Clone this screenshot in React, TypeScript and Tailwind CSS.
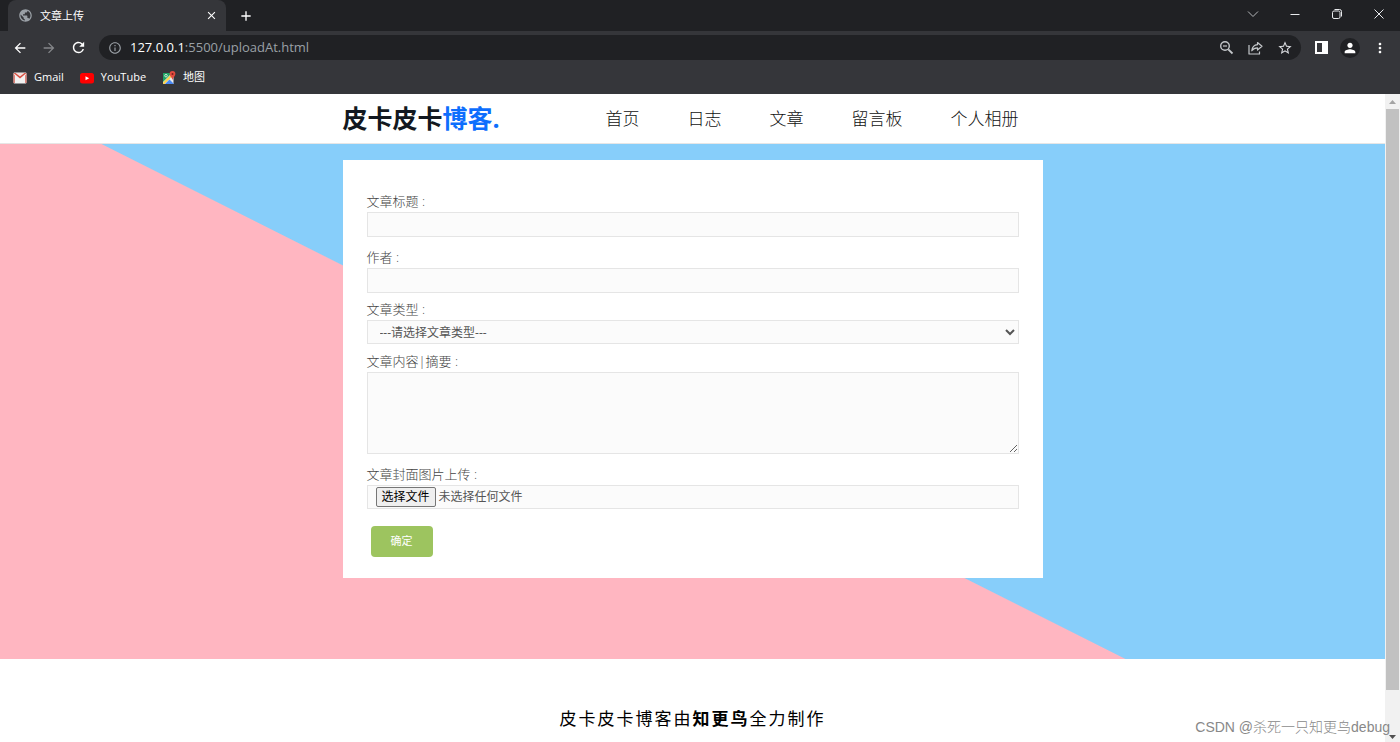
import {
  MdAdd,
  MdArrowBack,
  MdArrowForward,
  MdClose,
  MdInfoOutline,
  MdMoreVert,
  MdPerson,
  MdPublic,
  MdRefresh,
  MdStarBorder,
} from "react-icons/md";

const navItems = ["首页", "日志", "文章", "留言板", "个人相册"];

const fieldClass =
  "block w-full rounded-none border border-[#e5e5e5] bg-[#fbfbfb] px-2 text-xs text-[#555] outline-none";
const labelClass = "block pb-0.5 text-[13px] leading-[18px] font-light text-[#444]";

function GmailIcon() {
  return (
    <svg width="14" height="12" viewBox="0 0 14 12">
      <rect x="0.5" y="0.5" width="13" height="11" rx="1" fill="#f2f2f2" />
      <path d="M0.5 1h13L7 6.500z" fill="#d54b3d" />
      <path d="M2.500 1h9L7 4.500z" fill="#f2dedb" />
      <path d="M0.500 1.500v9.500h1.300V3.500zM13.500 1.500v9.500h-1.300V3.500z" fill="#d9685c" />
    </svg>
  );
}

function YouTubeIcon() {
  return (
    <svg width="14" height="12" viewBox="0 0 14 12">
      <rect x="0" y="1" width="14" height="10.500" rx="2.500" fill="#f00" />
      <path d="M5.500 4.200v4L9.200 6.200z" fill="#fff" />
    </svg>
  );
}

function MapsIcon() {
  return (
    <svg width="14" height="14" viewBox="0 0 14 14">
      <path d="M1 2h10.500v11H1z" fill="#e8eaed" />
      <path d="M1 2h9L1 11z" fill="#1fa463" />
      <path d="M1 13V11.500L9 3.500l1.500 1.500L2.500 13z" fill="#fbd24c" />
      <path d="M3 13l4.500-4.500L12 13z" fill="#4a89f3" />
      <circle cx="4" cy="4.700" r="1.300" fill="none" stroke="#fff" strokeWidth="0.700" />
      <path d="M10.500 0a2.900 2.900 0 0 1 2.900 2.900c0 2-2.300 3-2.900 6.100C9.900 5.900 7.600 4.900 7.600 2.900A2.900 2.900 0 0 1 10.500 0z" fill="#e14b3f" />
      <circle cx="10.500" cy="3" r="1" fill="#7d211b" />
    </svg>
  );
}

function ZoomOutIcon() {
  return (
    <svg width="15" height="15" viewBox="0 0 15 15" fill="none" stroke="#c4c7ca" strokeWidth="1.400">
      <circle cx="6" cy="6" r="4.300" />
      <path d="M9.300 9.300L13.500 13.500" strokeWidth="1.800" />
      <path d="M4 6h4" strokeWidth="1.200" />
    </svg>
  );
}

function ShareIcon() {
  return (
    <svg width="15" height="14" viewBox="0 0 15 14" fill="none" stroke="#c4c7ca" strokeWidth="1.200" strokeLinejoin="round">
      <path d="M1 4v9h10.500v-2.500" />
      <path d="M9.500 1.500L14 5.300 9.500 9V6.800C6.800 6.800 5.200 7.600 3.800 9.800 4.200 6.300 6 4 9.500 3.700z" />
    </svg>
  );
}

const bookmarks = [
  { label: "Gmail", Icon: GmailIcon },
  { label: "YouTube", Icon: YouTubeIcon },
  { label: "地图", Icon: MapsIcon },
];

function BrowserChrome() {
  return (
    <div className="bg-[#35363a] font-['Open_Sans','Noto_Sans_CJK_SC',sans-serif] text-white">
      <div className="flex h-[31px] items-stretch bg-[#202124] pl-2">
        <div className="flex w-[218px] items-center rounded-t-lg bg-[#35363a] pr-2 pl-[10px]">
          <MdPublic className="size-[15px] text-[#9aa0a6]" />
          <span className="ml-[7px] flex-1 pt-0.5 text-[11px]">文章上传</span>
          <button type="button" aria-label="关闭标签页">
            <MdClose className="size-[13px]" />
          </button>
        </div>
        <button type="button" aria-label="新标签页" className="ml-3">
          <MdAdd className="size-4" />
        </button>
        <div className="ml-auto flex items-center gap-[30px] pr-[15px] pb-1">
          <button type="button" aria-label="搜索标签页">
            <svg width="12" height="12" viewBox="0 0 12 12" fill="none" stroke="#b5b7ba">
              <path d="M1 3.500l5 5 5-5" />
            </svg>
          </button>
          <button type="button" aria-label="最小化">
            <svg width="12" height="12" viewBox="0 0 12 12" stroke="#e8eaed">
              <path d="M1.500 6.500h9" />
            </svg>
          </button>
          <button type="button" aria-label="还原">
            <svg width="12" height="12" viewBox="0 0 12 12" fill="none" stroke="#e8eaed">
              <rect x="1.500" y="3" width="7.500" height="7.500" rx="1.500" />
              <path d="M3.500 1.500h5a2 2 0 0 1 2 2v5" />
            </svg>
          </button>
          <button type="button" aria-label="关闭">
            <svg width="12" height="12" viewBox="0 0 12 12" stroke="#e8eaed">
              <path d="M1.500 1.500l9 9m0-9l-9 9" />
            </svg>
          </button>
        </div>
      </div>

      <div className="flex h-[33px] items-center pr-3 pl-3">
        <div className="flex items-center gap-[13px]">
          <button type="button" aria-label="后退">
            <MdArrowBack className="size-4" />
          </button>
          <button type="button" aria-label="前进">
            <MdArrowForward className="size-4 text-[#85878a]" />
          </button>
          <button type="button" aria-label="刷新">
            <MdRefresh className="size-[17px]" />
          </button>
        </div>
        <div className="ml-3 flex h-[25px] flex-1 items-center rounded-full bg-[#202124] pr-2 pl-[9px]">
          <MdInfoOutline className="size-[14px] text-[#9aa0a6]" />
          <span className="ml-2 flex-1 text-[13px] text-[#9aa0a6]">
            <span className="text-white">127.0.0.1</span>:5500/uploadAt.html
          </span>
          <div className="flex items-center gap-[14px]">
            <ZoomOutIcon />
            <ShareIcon />
            <MdStarBorder className="size-4 text-[#dadce0]" />
          </div>
        </div>
        <div className="ml-[14px] flex items-center gap-3">
          <svg width="13" height="13" viewBox="0 0 13 13">
            <path d="M0 0h13v13H0z" fill="#fff" />
            <path d="M2 2h5v9H2z" fill="#35363a" />
          </svg>
          <span className="flex size-5 items-center justify-center rounded-full bg-[#202124]">
            <MdPerson className="size-4" />
          </span>
          <button type="button" aria-label="更多">
            <MdMoreVert className="size-4" />
          </button>
        </div>
      </div>

      <div className="flex h-[30px] items-center gap-4 pb-[3px] pl-[13px]">
        {bookmarks.map(({ label, Icon }) => (
          <a key={label} href="#" className="flex items-center gap-[7px] text-[11px]">
            <Icon />
            {label}
          </a>
        ))}
      </div>
    </div>
  );
}

function UploadForm() {
  return (
    <form className="mx-auto w-full max-w-[700px] bg-white px-6 pt-8 pb-[21px]">
      <label htmlFor="title" className={labelClass}>文章标题 :</label>
      <input id="title" type="text" className={`${fieldClass} mb-[11px] h-[25px]`} />

      <label htmlFor="author" className={labelClass}>作者 :</label>
      <input id="author" type="text" className={`${fieldClass} mb-[7px] h-[25px]`} />

      <label htmlFor="type" className={labelClass}>文章类型 :</label>
      <select id="type" className={`${fieldClass} mb-2 h-6`}>
        <option>---请选择文章类型---</option>
      </select>

      <label htmlFor="content" className={labelClass}>文章内容|摘要 :</label>
      <textarea id="content" className={`${fieldClass} mb-[11px] h-[82px] resize`} />

      <label htmlFor="cover" className={labelClass}>文章封面图片上传 :</label>
      <div className={`${fieldClass} mb-[17px] flex h-6 items-center gap-[3px]`}>
        <input id="cover" type="file" className="sr-only" />
        <label htmlFor="cover" className="rounded-xs border border-[#767676] bg-[#efefef] px-[5px] leading-[18px] text-black">
          选择文件
        </label>
        <span>未选择任何文件</span>
      </div>

      <button type="submit" className="ml-1 block h-[31px] rounded-sm bg-[#9dc45f] px-5 text-[11px] text-white">
        确定
      </button>
    </form>
  );
}

function Scrollbar() {
  return (
    <div className="flex w-[15px] shrink-0 flex-col items-center bg-[#f1f1f1]">
      <svg width="15" height="15" viewBox="0 0 15 15" className="shrink-0">
        <path d="M4 10l3.500-4 3.500 4z" fill="#a3a3a3" />
      </svg>
      <div className="w-[13px] flex-[581] bg-[#c1c1c1]" />
      <div className="flex-[37]" />
      <svg width="15" height="15" viewBox="0 0 15 15" className="shrink-0">
        <path d="M4 8l3.500 4L11 8z" fill="#505050" />
      </svg>
    </div>
  );
}

export default function App() {
  return (
    <div className="relative flex min-h-screen flex-col bg-white font-['Open_Sans','Noto_Sans_CJK_SC',sans-serif]">
      <BrowserChrome />
      <div className="flex flex-1">
        <main className="flex-1">
          <header className="border-b border-[#e6e6e6] bg-white">
            <div className="mx-auto flex h-[49px] w-full max-w-[700px] items-center justify-between pr-6">
              <a href="#" className="text-[25px] leading-none font-bold text-[#121820]">
                皮卡皮卡<span className="text-[#0d6efd]">博客.</span>
              </a>
              <nav className="flex gap-12 text-[17px] font-light text-[#111]">
                {navItems.map((item) => (
                  <a key={item} href="#">{item}</a>
                ))}
              </nav>
            </div>
          </header>

          <section className="bg-[linear-gradient(26.7deg,#ffb6c1_calc(50%-36px),#87cefa_calc(50%-35px))] pt-4 pb-[81px]">
            <UploadForm />
          </section>

          <footer className="pt-12 text-center text-[17px] leading-6 tracking-[2px] text-black">
            皮卡皮卡博客由<b>知更鸟</b>全力制作
          </footer>
        </main>
        <Scrollbar />
      </div>
      <p className="absolute right-[10px] bottom-[5px] font-['Liberation_Sans','Noto_Sans_CJK_SC',sans-serif] text-sm font-light text-[#888]">
        CSDN @杀死一只知更鸟debug
      </p>
    </div>
  );
}
